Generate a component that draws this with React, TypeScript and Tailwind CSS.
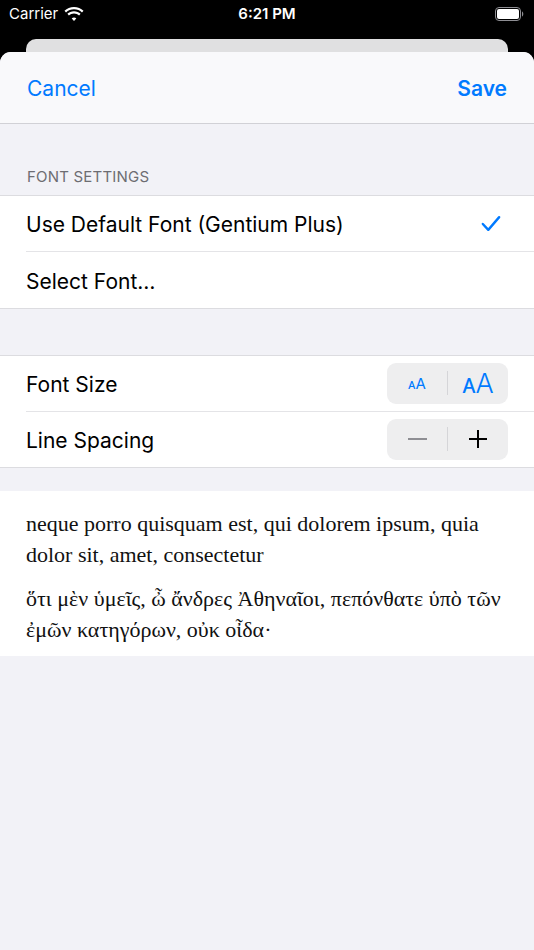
import React from 'react';

function Wifi() {
  return (
    <svg width="20" height="15" viewBox="0 0 20 15" fill="white">
      <path d="M10 2.2c3.1 0 5.9 1.2 8 3.2l1.5-1.6C17 1.4 13.7 0 10 0S3 1.4.5 3.8L2 5.4c2.1-2 4.9-3.2 8-3.2z" />
      <path d="M10 6.4c2 0 3.8.8 5.1 2l1.5-1.6C14.9 5.200 12.6 4.200 10 4.200S5.1 5.2 3.4 6.8l1.5 1.6c1.3-1.2 3.100-2 5.100-2z" />
      <path d="M10 10.5c.9 0 1.7.3 2.300.9L10 14 7.700 11.400c.6-.6 1.400-.9 2.300-.9z" />
    </svg>
  );
}

function Battery() {
  return (
    <svg width="30" height="14" viewBox="0 0 30 14">
      <rect x="0.5" y="0.5" width="25" height="13" rx="3.5" fill="none" stroke="#8e8e93" />
      <rect x="2" y="2" width="22" height="10" rx="2" fill="white" />
      <path d="M27 4.5v5c.8-.3 1.300-1.300 1.300-2.500S27.800 4.800 27 4.500z" fill="#8e8e93" />
    </svg>
  );
}

function Check() {
  return (
    <svg width="20" height="17" viewBox="0 0 22 18" fill="none" stroke="#007aff" strokeWidth="2.6" strokeLinecap="round" strokeLinejoin="round">
      <path d="M2 9.5l6 6.5L20 2" />
    </svg>
  );
}

function Segmented({ left, right }: { left: React.ReactNode; right: React.ReactNode }) {
  return (
    <div className="flex items-center w-[121px] h-[41px] rounded-[9px] bg-[#eeeeef]">
      <div className="flex-1 flex items-center justify-center">{left}</div>
      <div className="w-px h-[24px] bg-[#d5d5d8]" />
      <div className="flex-1 flex items-center justify-center">{right}</div>
    </div>
  );
}

export default function App() {
  const sans = "font-['Inter','Liberation_Sans',sans-serif]";
  return (
    <div className={`w-[534px] h-[950px] bg-black flex flex-col overflow-hidden ${sans}`}>
      {/* status bar */}
      <div className="h-[28px] flex items-center px-[9px] text-white text-[15px] relative shrink-0">
        <div className="flex items-center gap-[6px]">
          <span>Carrier</span>
          <Wifi />
        </div>
        <div className="absolute left-0 right-0 text-center font-semibold pointer-events-none">6:21 PM</div>
        <div className="ml-auto">
          <Battery />
        </div>
      </div>

      {/* back card */}
      <div className="mx-[26px] mt-[11px] h-[20px] rounded-t-[10px] bg-[#e0e0e1] shrink-0" />

      {/* sheet */}
      <div className="-mt-[7px] flex-1 rounded-t-[11px] bg-[#f2f2f7] overflow-hidden flex flex-col">
        <div className="h-[72px] bg-[#f9f9fb] border-b border-[#d1d1d6] flex items-center justify-between px-[27px] pt-[2px] text-[21px] text-[#007aff] shrink-0">
          <span>Cancel</span>
          <span className="font-semibold">Save</span>
        </div>

        <div className="pt-[42px] pb-[6px] px-[27px] text-[15px] text-[#6d6d72] tracking-[0.2px]">FONT SETTINGS</div>
        <div className="bg-white border-y border-[#dcdce0]">
          <div className="h-[55px] flex items-center justify-between pl-[26px] pr-[33px] text-[21px] text-black">
            <span className="pt-[4px]">Use Default Font (Gentium Plus)</span>
            <Check />
          </div>
          <div className="ml-[26px] h-px bg-[#e4e4e7]" />
          <div className="h-[56px] flex items-center pl-[26px] text-[21px] text-black">
            <span className="pt-[4px]">Select Font…</span>
          </div>
        </div>

        <div className="h-[46px]" />
        <div className="bg-white border-y border-[#dcdce0]">
          <div className="h-[55px] flex items-center justify-between pl-[26px] pr-[26px] text-[21px] text-black">
            <span className="pt-[4px]">Font Size</span>
            <Segmented
              left={<span className="text-[#007aff] text-[15px] leading-none">ᴀA</span>}
              right={<span className="text-[#007aff] text-[27px] leading-none font-light">ᴀA</span>}
            />
          </div>
          <div className="ml-[26px] h-px bg-[#e4e4e7]" />
          <div className="h-[55px] flex items-center justify-between pl-[26px] pr-[26px] text-[21px] text-black">
            <span className="pt-[4px]">Line Spacing</span>
            <Segmented
              left={<div className="w-[19px] h-[2px] bg-[#8e8e93]" />}
              right={
                <svg width="20" height="20" viewBox="0 0 20 20" stroke="black" strokeWidth="2">
                  <path d="M10 1v18M1 10h18" />
                </svg>
              }
            />
          </div>
        </div>

        <div className="h-[23px]" />
        <div className="bg-white px-[26px] pt-[17px] pb-[11px] font-['Liberation_Serif','DejaVu_Serif',serif] text-[22px] leading-[31px] text-[#111]">
          <p>neque porro quisquam est, qui dolorem ipsum, quia dolor sit, amet, consectetur</p>
          <p className="mt-[13px]">ὅτι μὲν ὑμεῖς, ὦ ἄνδρες Ἀθηναῖοι, πεπόνθατε ὑπὸ τῶν ἐμῶν κατηγόρων, οὐκ οἶδα·</p>
        </div>
      </div>
    </div>
  );
}
